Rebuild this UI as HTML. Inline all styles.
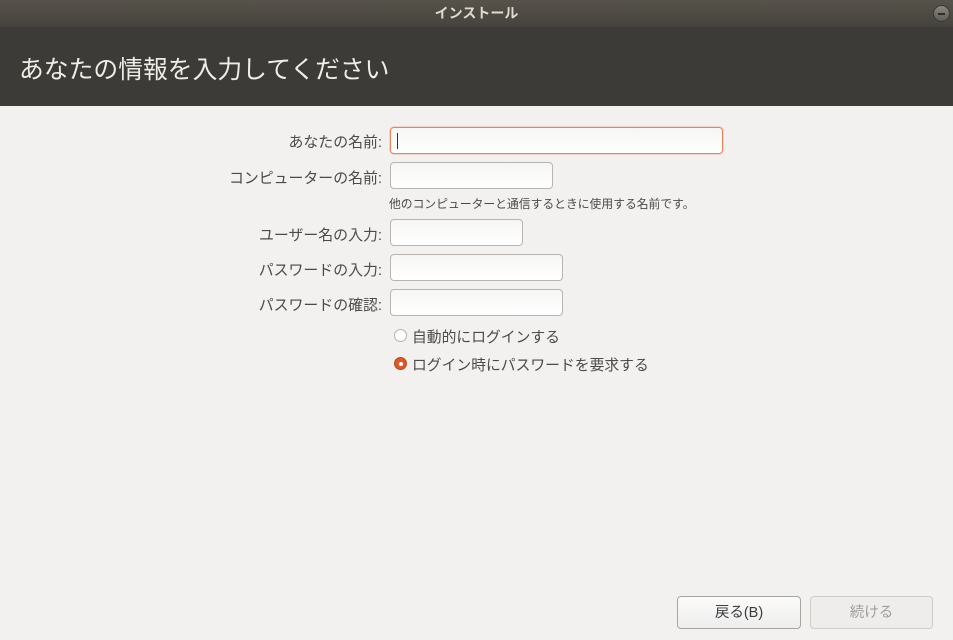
<!DOCTYPE html>
<html><head><meta charset="utf-8"><style>
*{margin:0;padding:0;box-sizing:border-box}
body{width:953px;height:640px;overflow:hidden;background:#f2f1f0;font-family:"Liberation Sans","Noto Sans CJK JP",sans-serif;position:relative;color:#3c3c3c}
.tb{position:absolute;left:0;top:0;width:953px;height:27px;background:linear-gradient(#57534b,#45433d);color:#dfdbd2;font-size:14px;font-weight:bold;text-align:center;line-height:26px}
.min{position:absolute;left:933px;top:5px;width:17px;height:17px;border-radius:50%;background:linear-gradient(#8a8780,#5f5d57);border:1px solid #3a3935}
.min:after{content:"";position:absolute;left:4px;top:7px;width:7px;height:1.5px;background:#2e2d2a}
.hd{position:absolute;left:0;top:27px;width:953px;height:79px;background:#3c3b37;color:#f0ede6;font-size:24.8px;padding-left:19px;line-height:88px}
.lbl{position:absolute;right:571px;font-size:14.9px;color:#4a4a4a}
.in{position:absolute;left:390px;height:27px;border:1px solid #b8b5b0;border-radius:4px;background:linear-gradient(#f6f6f5,#fff)}
.hint{position:absolute;left:389px;top:195px;font-size:11.8px;color:#4a4a4a}
.rad{position:absolute;left:394px;width:13px;height:13px;border-radius:50%}
.rl{position:absolute;left:412px;font-size:14.8px;color:#4a4a4a}
.btn{position:absolute;top:596px;height:33px;border-radius:4px;font-size:14.5px;text-align:center;line-height:33px}
</style></head><body>
<div class="tb">インストール</div><div class="min"></div>
<div class="hd">あなたの情報を入力してください</div>

<div class="lbl" style="top:131px">あなたの名前:</div>
<div class="in" style="top:127px;width:333px;border-color:#e9835f;box-shadow:0 0 0 1px rgba(233,131,95,.25)"><div style="position:absolute;left:6px;top:5px;width:1px;height:16px;background:#333"></div></div>
<div class="lbl" style="top:167px">コンピューターの名前:</div>
<div class="in" style="top:162px;width:163px"></div>
<div class="hint">他のコンピューターと通信するときに使用する名前です。</div>
<div class="lbl" style="top:224px">ユーザー名の入力:</div>
<div class="in" style="top:219px;width:133px"></div>
<div class="lbl" style="top:259px">パスワードの入力:</div>
<div class="in" style="top:254px;width:173px"></div>
<div class="lbl" style="top:294px">パスワードの確認:</div>
<div class="in" style="top:289px;width:173px"></div>

<div class="rad" style="top:329px;border:1px solid #b5b2ad;background:#fff"></div>
<div class="rl" style="top:326px">自動的にログインする</div>
<div class="rad" style="top:357px;background:#d95a2b;border:1px solid #b94a22"><div style="position:absolute;left:3.5px;top:3.5px;width:4px;height:4px;border-radius:50%;background:#fff"></div></div>
<div class="rl" style="top:354px">ログイン時にパスワードを要求する</div>

<div class="btn" style="left:677px;width:124px;border:1px solid #a8a5a0;background:linear-gradient(#fbfbfb,#eeedec);color:#3c3c3c">戻る(B)</div>
<div class="btn" style="left:810px;width:123px;border:1px solid #cfccc8;background:#eeedec;color:#a09e9a">続ける</div>
</body></html>
